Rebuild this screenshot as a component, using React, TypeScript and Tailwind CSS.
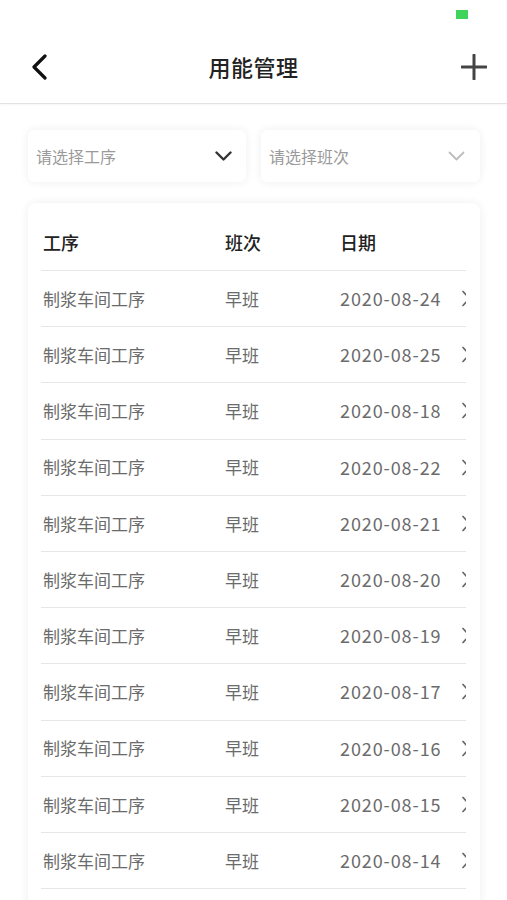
import React from 'react'

const rows = [
  '2020-08-24',
  '2020-08-25',
  '2020-08-18',
  '2020-08-22',
  '2020-08-21',
  '2020-08-20',
  '2020-08-19',
  '2020-08-17',
  '2020-08-16',
  '2020-08-15',
  '2020-08-14',
]

function ChevronDown({ dark }: { dark?: boolean }) {
  return (
    <svg width="17" height="10" viewBox="0 0 17 10" fill="none">
      <path
        d="M1.5 1.5 L8.5 8.5 L15.5 1.5"
        stroke={dark ? '#333333' : '#bdbdbd'}
        strokeWidth={dark ? 2.4 : 1.8}
        strokeLinecap="round"
        strokeLinejoin="round"
      />
    </svg>
  )
}

export default function App() {
  return (
    <div className="min-h-screen overflow-hidden bg-white font-['Noto_Sans_CJK_SC','Noto_Sans',sans-serif]">
      {/* status bar */}
      <div className="flex h-[30px] justify-end pr-[39px] pt-[10px]">
        <div className="h-[9px] w-[12px] bg-[#3fd35c]" />
      </div>

      {/* nav */}
      <div className="grid h-[74px] grid-cols-[1fr_auto_1fr] items-center border-b border-[#e2e2e2] px-[20px] shadow-[0_1px_2px_rgba(0,0,0,0.04)]">
        <div className="flex items-center pl-[10px]">
          <svg width="18" height="26" viewBox="0 0 18 26" fill="none">
            <path d="M15 2 L4 13 L15 24" stroke="#111" strokeWidth="3.2" strokeLinecap="round" strokeLinejoin="round" />
          </svg>
        </div>
        <div className="text-[22px] font-medium text-[#222] tracking-[0.5px]">用能管理</div>
        <div className="flex justify-end">
          <svg width="26" height="26" viewBox="0 0 26 26" fill="none">
            <path d="M13 1 V25 M1 13 H25" stroke="#444" strokeWidth="3" strokeLinecap="round" />
          </svg>
        </div>
      </div>

      {/* filters */}
      <div className="mt-[26px] flex gap-[15px] pl-[28px] pr-[27px]">
        <div className="flex h-[52px] flex-1 items-center justify-between rounded-md bg-white pl-[8px] pr-[14px] shadow-[0_0_10px_rgba(0,0,0,0.07)]">
          <span className="text-[16px] text-[#9a9a9a]">请选择工序</span>
          <ChevronDown dark />
        </div>
        <div className="flex h-[52px] flex-1 items-center justify-between rounded-md bg-white pl-[8px] pr-[15px] shadow-[0_0_10px_rgba(0,0,0,0.07)]">
          <span className="text-[16px] text-[#9a9a9a]">请选择班次</span>
          <ChevronDown />
        </div>
      </div>

      {/* table card */}
      <div className="ml-[28px] mr-[27px] mt-[21px] rounded-lg bg-white pb-[30px] pl-[13px] pr-[14px] pt-[12px] shadow-[0_0_10px_rgba(0,0,0,0.07)]">
        <div className="overflow-hidden">
          <div className="flex h-[56px] items-center border-b border-[#e6e6e6] text-[18px] font-medium text-[#222]">
            <div className="w-[184px] shrink-0 pl-[2px]">工序</div>
            <div className="w-[115px] shrink-0">班次</div>
            <div className="shrink-0">日期</div>
          </div>
          {rows.map((d) => (
            <div
              key={d}
              className="flex h-[56.2px] items-center border-b border-[#e6e6e6] text-[17px] text-[#6b6b6b]"
            >
              <div className="w-[184px] shrink-0 pl-[2px]">制浆车间工序</div>
              <div className="w-[115px] shrink-0">早班</div>
              <div className="w-[122px] shrink-0 text-[18px] tracking-[0.9px]">{d}</div>
              <svg className="shrink-0" width="10" height="17" viewBox="0 0 10 17" fill="none">
                <path d="M1 1.5 L7.5 8.5 L1 15.5" stroke="#666" strokeWidth="1.7" strokeLinecap="round" strokeLinejoin="round" />
              </svg>
            </div>
          ))}
        </div>
      </div>
    </div>
  )
}
